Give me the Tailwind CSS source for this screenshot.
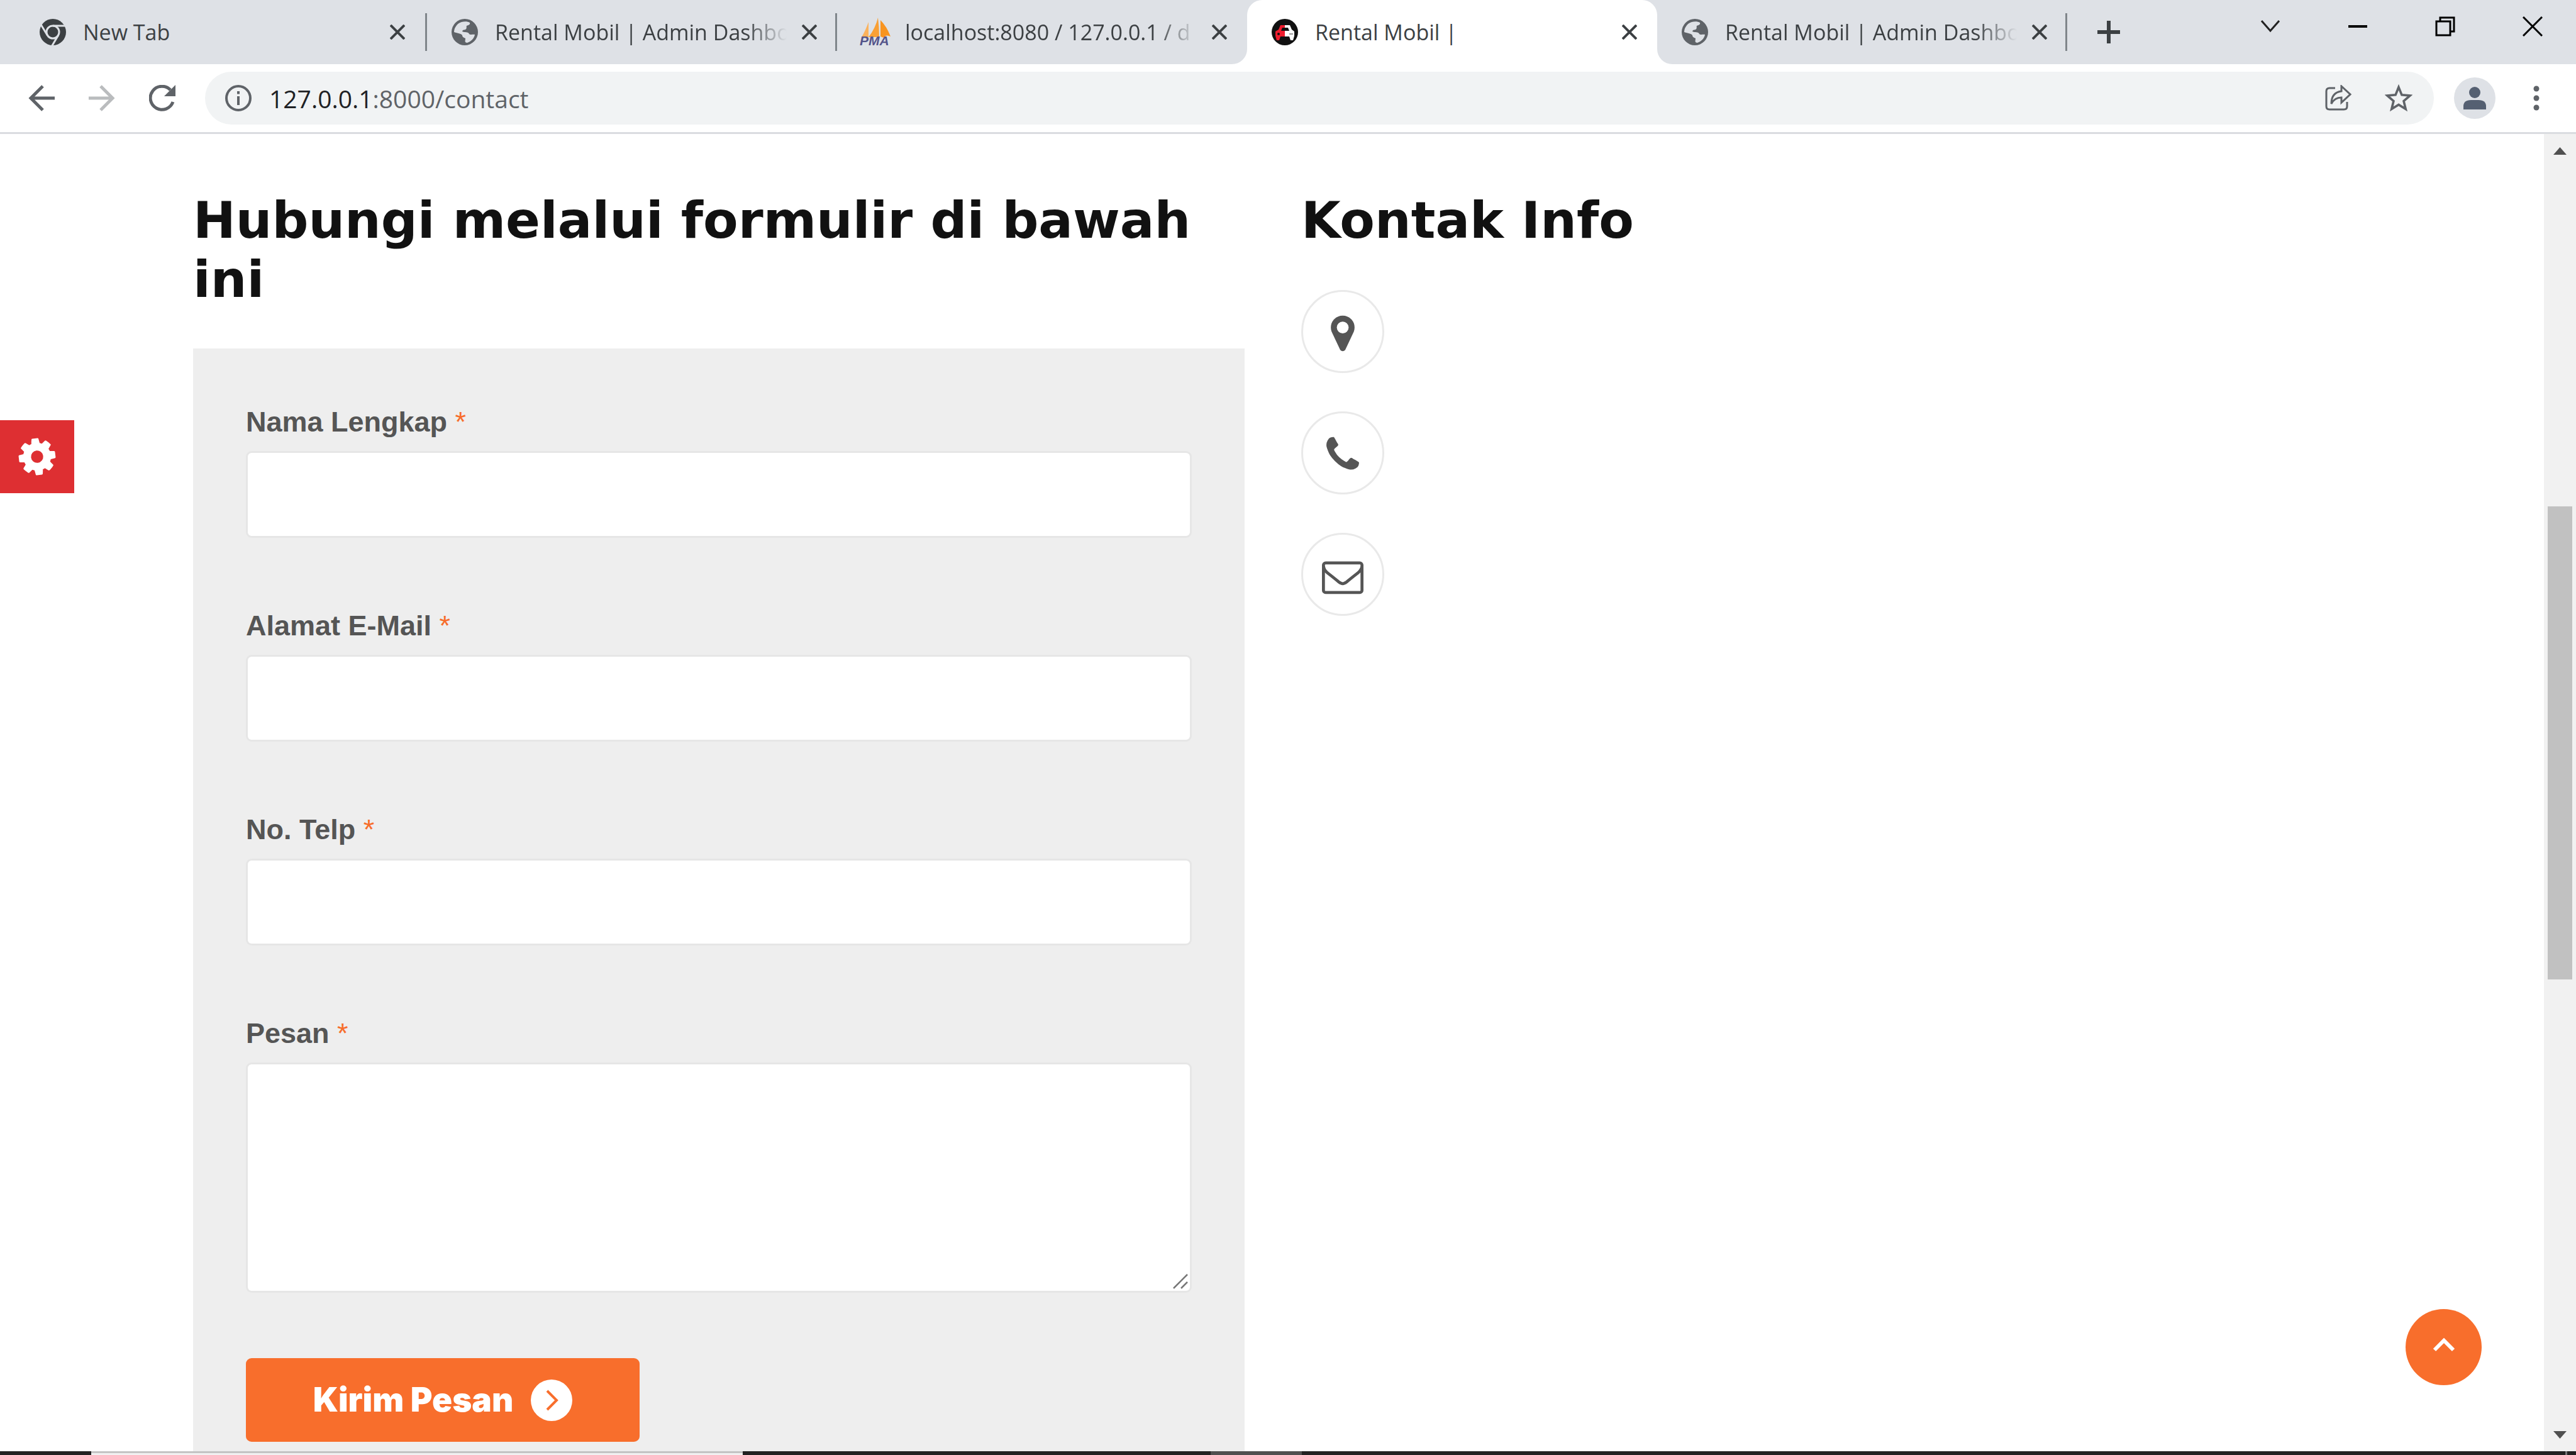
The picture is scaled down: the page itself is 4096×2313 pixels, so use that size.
<!DOCTYPE html>
<html lang="id">
<head>
<meta charset="utf-8">
<title>Rental Mobil |</title>
<script src="https://cdn.jsdelivr.net/npm/@tailwindcss/browser@4"></script>
</head>
<body class="flex h-screen flex-col overflow-hidden bg-white font-['Liberation_Sans',sans-serif]">

<svg class="hidden" aria-hidden="true">
  <symbol id="x" viewBox="0 0 24 24"><path d="M1 1L23 23M23 1L1 23" stroke="#3c4043" stroke-width="4" fill="none"/></symbol>
  <symbol id="globe" viewBox="0 0 42 42"><circle cx="21" cy="21" r="21" fill="#5f6368"/><path d="M16 5C20 4 26 4 29 6C30 9 27 10 24 11C23 13 25 15 22 17C19 18 18 17 17 20C20 22 27 20 28 24C30 26 35 24 37 25C36 31 31 36 25 38C20 38 22 34 22 31C20 30 17 29 17 26C15 23 10 23 4 21C4 14 9 7 16 5Z" fill="#dee1e6"/></symbol>
</svg>

<header class="shrink-0 font-['Open_Sans',sans-serif] text-[#3c4043]">
  <div class="flex h-[102px] bg-[#dee1e6] pl-6">
    <nav class="flex text-[34px]" aria-label="Tab">
      <div class="flex w-[655px] items-center pl-9">
        <svg class="size-12 shrink-0 p-[3px]" viewBox="0 0 42 42"><circle cx="21" cy="21" r="21" fill="#3c4043"/><g stroke="#dee1e6" stroke-width="3" fill="none"><circle cx="21" cy="21" r="10"/><path d="M21 11H41M12.300 26L2 9M29.700 26L19 44"/></g></svg>
        <a href="#" class="ml-6 w-[464px] overflow-hidden whitespace-nowrap">New Tab</a>
        <button class="ml-3 flex size-12 items-center justify-center" aria-label="Tutup"><svg class="size-6"><use href="#x"/></svg></button>
        <span class="ml-auto h-[60px] w-[3px] bg-[#80868b]"></span>
      </div>
      <div class="flex w-[652px] items-center pl-9">
        <svg class="size-12 shrink-0 p-[3px]"><use href="#globe"/></svg>
        <a href="#" class="ml-6 w-[464px] overflow-hidden whitespace-nowrap [mask-image:linear-gradient(to_right,black_86%,transparent)]">Rental Mobil | Admin Dashboard</a>
        <button class="ml-3 flex size-12 items-center justify-center" aria-label="Tutup"><svg class="size-6"><use href="#x"/></svg></button>
        <span class="ml-auto h-[60px] w-[3px] bg-[#80868b]"></span>
      </div>
      <div class="flex w-[652px] items-center pl-9">
        <svg class="size-12 shrink-0 overflow-visible" viewBox="0 0 48 48"><path d="M14 8V32H3Q9 22 14 8Z" fill="#fbb25c"/><path d="M29 1Q31 16 31 32H14Q25 18 29 1Z" fill="#f9a035"/><path d="M33 5Q43 15 49 31Q42 27 38 33L33 31Z" fill="#f89420"/><text x="0" y="45" font-family="Liberation Sans" font-size="21" font-weight="700" font-style="italic" fill="#53548a">PMA</text></svg>
        <a href="#" class="ml-6 w-[464px] overflow-hidden whitespace-nowrap [mask-image:linear-gradient(to_right,black_86%,transparent)]">localhost:8080 / 127.0.0.1 / d</a>
        <button class="ml-3 flex size-12 items-center justify-center" aria-label="Tutup"><svg class="size-6"><use href="#x"/></svg></button>
      </div>
      <div class="relative flex w-[652px] items-center rounded-t-[24px] bg-white pl-9">
        <svg class="absolute bottom-0 -left-6 size-6" viewBox="0 0 24 24"><path d="M24 0V24H0A24 24 0 0 0 24 0Z" fill="#fff"/></svg>
        <svg class="absolute -right-6 bottom-0 size-6" viewBox="0 0 24 24"><path d="M0 0V24H24A24 24 0 0 1 0 0Z" fill="#fff"/></svg>
        <svg class="size-12 shrink-0 p-[3px]" viewBox="0 0 42 42"><circle cx="21" cy="21" r="21" fill="#111"/><path d="M21 10H14L11 17L6 20V27L8 34H12L14 28H21V19H15L17 14H21Z" fill="#ee1c2e"/><path d="M21 10H29L32 17L36 20V27L34 34H30L28 28H21V19H28L26 14H21Z" fill="#fff"/><circle cx="11" cy="24" r="2" fill="#111"/><path d="M28 24H34" stroke="#999" stroke-width="2"/></svg>
        <a href="#" class="ml-6 w-[464px] overflow-hidden whitespace-nowrap">Rental Mobil |</a>
        <button class="ml-3 flex size-12 items-center justify-center" aria-label="Tutup"><svg class="size-6"><use href="#x"/></svg></button>
      </div>
      <div class="flex w-[652px] items-center pl-9">
        <svg class="size-12 shrink-0 p-[3px]"><use href="#globe"/></svg>
        <a href="#" class="ml-6 w-[464px] overflow-hidden whitespace-nowrap [mask-image:linear-gradient(to_right,black_86%,transparent)]">Rental Mobil | Admin Dashboard</a>
        <button class="ml-3 flex size-12 items-center justify-center" aria-label="Tutup"><svg class="size-6"><use href="#x"/></svg></button>
        <span class="ml-auto h-[60px] w-[3px] bg-[#80868b]"></span>
      </div>
    </nav>
    <button class="ml-6 flex w-[84px] items-center justify-center" aria-label="Tab baru"><svg class="size-9" viewBox="0 0 36 36"><path d="M18 0V36M0 18H36" stroke="#3c4043" stroke-width="6"/></svg></button>
    <div class="ml-auto flex h-[84px] text-black">
      <button class="flex w-[139px] items-center justify-center" aria-label="Cari tab"><svg class="h-5 w-[30px]" viewBox="0 0 30 20"><path d="M1 1L15 17L29 1" stroke="#222" stroke-width="3" fill="none"/></svg></button>
      <button class="flex w-[139px] items-center justify-center" aria-label="Kecilkan"><span class="h-1 w-[30px] bg-black"></span></button>
      <button class="flex w-[139px] items-center justify-center" aria-label="Pulihkan"><svg class="size-8" viewBox="0 0 32 32" fill="none" stroke="#000" stroke-width="3"><path d="M2 8H24V30H2ZM8 8V2H30V24H24"/></svg></button>
      <button class="flex w-[139px] items-center justify-center" aria-label="Tutup jendela"><svg class="size-8" viewBox="0 0 32 32"><path d="M1 1L31 31M31 1L1 31" stroke="#000" stroke-width="3"/></svg></button>
    </div>
  </div>

  <div class="flex h-[111px] items-center border-b-[3px] border-[#dadce0] pl-[18px]">
    <button class="flex w-24 justify-center" aria-label="Kembali"><svg class="size-[42px]" viewBox="0 0 42 42"><path d="M42 21H4M23 2L4 21L23 40" stroke="#5f6368" stroke-width="5" fill="none"/></svg></button>
    <button class="flex w-24 justify-center" aria-label="Maju"><svg class="size-[42px]" viewBox="0 0 42 42"><path d="M0 21H38M19 2L38 21L19 40" stroke="#babcbe" stroke-width="5" fill="none"/></svg></button>
    <button class="flex w-24 justify-center" aria-label="Muat ulang"><svg class="size-[42px]" viewBox="0 0 42 42"><path d="M38 27A18.500 18.500 0 1 1 34 8" stroke="#5f6368" stroke-width="5" fill="none"/><path d="M42 0V18H24Z" fill="#5f6368"/></svg></button>
    <div class="ml-5 flex h-[84px] flex-1 items-center rounded-full bg-[#f1f3f4] pl-8">
      <svg class="size-[42px] shrink-0" viewBox="0 0 42 42"><circle cx="21" cy="21" r="19" stroke="#5f6368" stroke-width="4" fill="none"/><path d="M21 18V32M21 10V14.500" stroke="#5f6368" stroke-width="4"/></svg>
      <p class="ml-7 flex-1 text-[39px] leading-none text-[#5f6368]"><span class="text-[#202124]">127.0.0.1</span>:8000/contact</p>
      <button class="flex w-24 justify-center" aria-label="Bagikan"><svg class="size-[42px]" viewBox="0 0 42 42" fill="none" stroke="#5f6368" stroke-width="3"><path d="M16 5H7Q2 5 2 10V34Q2 39 7 39H30Q35 39 35 34V27"/><path d="M26 2L40 15L26 28V20Q15 20 10 30Q10 12 26 10Z"/></svg></button>
      <button class="mr-2 flex w-24 justify-center" aria-label="Markah"><svg class="size-11" viewBox="0 0 24 24"><path d="M12 2.500L14.700 9.200L21.900 9.800L16.400 14.500L18.100 21.500L12 17.700L5.900 21.500L7.600 14.500L2.100 9.800L9.300 9.200Z" stroke="#5f6368" stroke-width="2" fill="none"/></svg></button>
    </div>
    <button class="ml-8 size-[66px]" aria-label="Profil"><svg viewBox="0 0 66 66"><circle cx="33" cy="33" r="33" fill="#dee1e6"/><circle cx="33" cy="24" r="9" fill="#556072"/><path d="M15 51V46Q15 36 27 36H39Q51 36 51 46V51Z" fill="#556072"/></svg></button>
    <button class="mr-[30px] ml-8 flex w-[66px] justify-center" aria-label="Menu"><svg class="h-10 w-[10px]" viewBox="0 0 10 40" fill="#5f6368"><circle cx="5" cy="5" r="4.500"/><circle cx="5" cy="20" r="4.500"/><circle cx="5" cy="35" r="4.500"/></svg></button>
  </div>
</header>

<div class="relative flex min-h-0 flex-1">
  <main class="grid min-w-0 flex-1 grid-cols-2 gap-[90px] overflow-hidden pr-[304px] pl-[307px] text-[#555]">
    <section class="flex flex-col pt-[90px]">
      <h2 class="font-['DejaVu_Sans',sans-serif] text-[81px] leading-[94px] font-bold text-[#111]">Hubungi melalui formulir di bawah ini</h2>
      <form class="mt-[63px] flex-1 bg-[#eee] px-[84px] pt-[90px] text-[45px] font-bold">
        <div class="mb-[113px]">
          <label for="nama" class="block h-[73px] leading-[54px]">Nama Lengkap <span class="font-normal text-[#f76d2b]">*</span></label>
          <input id="nama" type="text" class="block h-[138px] w-full rounded-[9px] border-[3px] border-[#e6e6e6] bg-white px-9">
        </div>
        <div class="mb-[113px]">
          <label for="email" class="block h-[73px] leading-[54px]">Alamat E-Mail <span class="font-normal text-[#f76d2b]">*</span></label>
          <input id="email" type="email" class="block h-[138px] w-full rounded-[9px] border-[3px] border-[#e6e6e6] bg-white px-9">
        </div>
        <div class="mb-[113px]">
          <label for="telp" class="block h-[73px] leading-[54px]">No. Telp <span class="font-normal text-[#f76d2b]">*</span></label>
          <input id="telp" type="tel" class="block h-[138px] w-full rounded-[9px] border-[3px] border-[#e6e6e6] bg-white px-9">
        </div>
        <div class="relative">
          <label for="pesan" class="block h-[73px] leading-[54px]">Pesan <span class="font-normal text-[#f76d2b]">*</span></label>
          <textarea id="pesan" class="block h-[366px] w-full resize-none rounded-[9px] border-[3px] border-[#e6e6e6] bg-white px-9"></textarea>
          <svg class="pointer-events-none absolute right-[6px] bottom-[6px] size-6" viewBox="0 0 24 24"><path d="M1 23L23 1M13 23L23 13" stroke="#777" stroke-width="2.500"/></svg>
        </div>
        <button type="submit" class="mt-[104px] flex h-[133px] w-[626px] items-center justify-center gap-7 rounded-[9px] bg-[#f86e2c] font-['Inter',sans-serif] text-[53px] font-black text-white">Kirim Pesan
          <svg class="size-[66px]" viewBox="0 0 66 66"><circle cx="33" cy="33" r="33" fill="#fff"/><path d="M26 18L41 33L26 48" stroke="#f86e2c" stroke-width="4" fill="none"/></svg>
        </button>
      </form>
    </section>
    <section class="pt-[90px]">
      <h2 class="font-['DejaVu_Sans',sans-serif] text-[81px] leading-[94px] font-bold text-[#111]">Kontak Info</h2>
      <ul class="mt-16 flex flex-col gap-[61px]">
        <li class="flex size-[132px] items-center justify-center rounded-full border-[3px] border-[#e9e9e9] pt-[6px]"><svg class="size-[66px]" viewBox="0 0 1792 1792" fill="#555"><path d="M1152 640q0-106-75-181t-181-75-181 75-75 181 75 181 181 75 181-75 75-181zm256 0q0 109-33 179l-364 774q-16 33-47.500 52t-67.500 19-67.500-19-46.500-52l-365-774q-33-70-33-179 0-212 150-362t362-150 362 150 150 362z"/></svg></li>
        <li class="flex size-[132px] items-center justify-center rounded-full border-[3px] border-[#e9e9e9] pt-[6px]"><svg class="size-[66px]" viewBox="0 0 1792 1792" fill="#555"><path d="M1600 1240q0 27-10 70.500t-21 68.500q-21 50-122 106-94 51-186 51-27 0-53-3.500t-57.500-12.500-47-14.500-55.500-20.500-49-18q-98-35-175-83-127-79-264-216t-216-264q-48-77-83-175-3-9-18-49t-20.500-55.500-14.500-47-12.500-57.500-3.500-53q0-92 51-186 56-101 106-122 25-11 68.500-21t70.500-10q14 0 21 3 18 6 53 76 11 19 30 54t35 63.500 31 53.500q3 4 17.500 25t21.500 35.500 7 28.500q0 20-28.500 50t-62 55-62 53-28.500 46q0 9 5 22.500t8.500 20.500 14 24 11.500 19q76 137 174 235t235 174q2 1 19 11.500t24 14 20.500 8.500 22.500 5q18 0 46-28.500t53-62 55-62 50-28.500q14 0 28.500 7t35.500 21.500 25 17.500q25 15 53.500 31t63.500 35 54 30q70 35 76 53 3 7 3 21z"/></svg></li>
        <li class="flex size-[132px] items-center justify-center rounded-full border-[3px] border-[#e9e9e9] pt-[6px]"><svg class="size-[66px]" viewBox="0 0 1792 1792" fill="#555"><path d="M1664 1504v-768q-32 36-69 66-268 206-426 338-51 43-83 67t-86.500 48.500-102.500 24.500h-2q-48 0-102.500-24.500t-86.500-48.500-83-67q-158-132-426-338-37-30-69-66v768q0 13 9.500 22.500t22.500 9.500h1472q13 0 22.500-9.500t9.500-22.500zm0-1051v-24.500l-.5-13-3-12.500-5.500-9-9-7.500-14-2.500h-1472q-13 0-22.500 9.500t-9.500 22.500q0 168 147 284 193 152 401 317 6 5 35 29.500t46 37.500 44.500 31.500 50.500 27.500 43 9h2q20 0 43-9t50.500-27.500 44.500-31.500 46-37.500 35-29.500q208-165 401-317 54-43 100.500-115.500t46.500-131.500zm128-37v1088q0 66-47 113t-113 47h-1472q-66 0-113-47t-47-113v-1088q0-66 47-113t113-47h1472q66 0 113 47t47 113z"/></svg></li>
      </ul>
    </section>
  </main>

  <aside class="flex w-[51px] shrink-0 flex-col items-center justify-between bg-[#f1f1f1] pt-[21px] pb-5">
    <svg class="h-3 w-[21px]" viewBox="0 0 21 12"><path d="M0 12L10.500 0L21 12Z" fill="#505050"/></svg>
    <span class="mt-[559px] mb-auto h-[752px] w-[39px] bg-[#c1c1c1]"></span>
    <svg class="h-3 w-[21px]" viewBox="0 0 21 12"><path d="M0 0L10.500 12L21 0Z" fill="#505050"/></svg>
  </aside>

  <button class="absolute top-[455px] left-0 flex h-[116px] w-[118px] items-center justify-center bg-[#de2f32]" aria-label="Pengaturan"><svg class="size-[68px]" viewBox="0 0 1792 1792" fill="#fff"><path transform="rotate(-7 896 896)" d="M1152 896q0-106-75-181t-181-75-181 75-75 181 75 181 181 75 181-75 75-181zm512-109v222q0 12-8 23t-20 13l-185 28q-19 54-39 91 35 50 107 138 10 12 10 25t-9 23q-27 37-99 108t-94 71q-12 0-26-9l-138-108q-44 23-91 38-16 136-29 186-7 28-36 28h-222q-14 0-24.500-8.500t-11.500-21.500l-28-184q-49-16-90-37l-141 107q-10 9-25 9-14 0-25-11-126-114-165-168-7-10-7-23 0-12 8-23 15-21 51-66.500t54-70.500q-27-50-41-99l-183-27q-13-2-21-12.500t-8-23.500v-222q0-12 8-23t19-13l186-28q14-46 39-92-40-57-107-138-10-12-10-24 0-10 9-23 26-36 98.500-107.500t94.500-71.500q13 0 26 10l138 107q44-23 91-38 16-136 29-186 7-28 36-28h222q14 0 24.500 8.500t11.500 21.500l28 184q49 16 90 37l142-107q9-9 24-9 13 0 25 10 129 119 165 170 7 8 7 22 0 12-8 23-15 21-51 66.500t-54 70.500q26 50 41 98l183 28q13 2 21 12.500t8 23.500z"/></svg></button>
  <button class="absolute right-[150px] bottom-[105px] flex size-[121px] items-center justify-center rounded-full bg-[#f86e2c]" aria-label="Ke atas"><svg class="h-[32px] w-9" viewBox="0 0 36 32"><path d="M3 20L18 5L33 20" stroke="#fff" stroke-width="6" fill="none"/></svg></button>
</div>

<footer class="flex h-[6px] shrink-0 bg-[#222]">
  <span class="ml-[145px] w-[1036px] border-t-[3px] border-[#c4c4c4] bg-[#f1f1f1]"></span>
  <span class="ml-[744px] w-[145px] bg-[#505050]"></span>
  <span class="mr-[14px] ml-auto w-[3px] bg-[#777]"></span>
</footer>
</body>
</html>
